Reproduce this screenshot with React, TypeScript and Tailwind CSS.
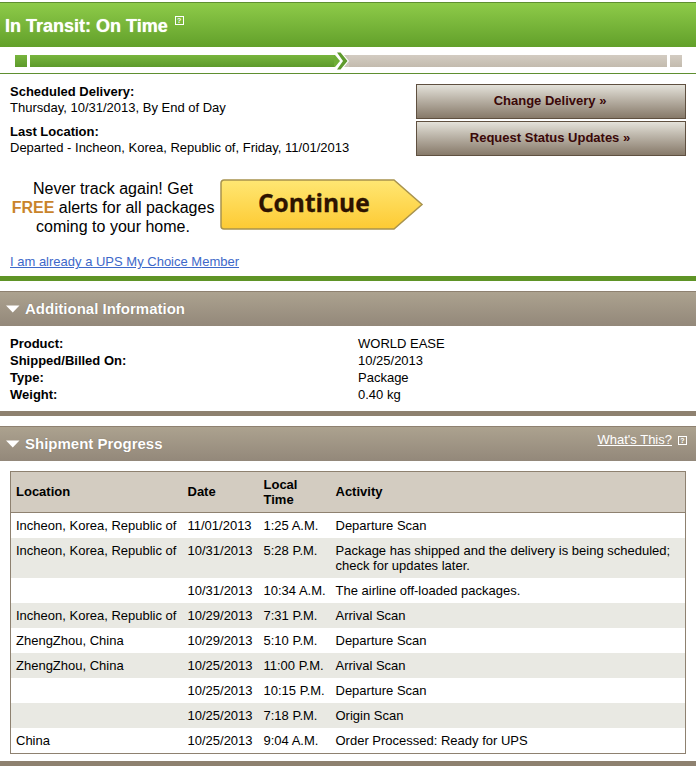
const rows = [
  { location: 'Incheon, Korea, Republic of', date: '11/01/2013', time: '1:25 A.M.', activity: 'Departure Scan' },
  {
    location: 'Incheon, Korea, Republic of',
    date: '10/31/2013',
    time: '5:28 P.M.',
    activity: 'Package has shipped and the delivery is being scheduled; check for updates later.',
  },
  { location: '', date: '10/31/2013', time: '10:34 A.M.', activity: 'The airline off-loaded packages.' },
  { location: 'Incheon, Korea, Republic of', date: '10/29/2013', time: '7:31 P.M.', activity: 'Arrival Scan' },
  { location: 'ZhengZhou, China', date: '10/29/2013', time: '5:10 P.M.', activity: 'Departure Scan' },
  { location: 'ZhengZhou, China', date: '10/25/2013', time: '11:00 P.M.', activity: 'Arrival Scan' },
  { location: '', date: '10/25/2013', time: '10:15 P.M.', activity: 'Departure Scan' },
  { location: '', date: '10/25/2013', time: '7:18 P.M.', activity: 'Origin Scan' },
  { location: 'China', date: '10/25/2013', time: '9:04 A.M.', activity: 'Order Processed: Ready for UPS' },
];

const details = [
  ['Product:', 'WORLD EASE'],
  ['Shipped/Billed On:', '10/25/2013'],
  ['Type:', 'Package'],
  ['Weight:', '0.40 kg'],
];

const HelpIcon = () => (
  <span className="inline-flex size-[9px] items-center justify-center border border-white text-[7px] leading-none font-bold text-white">
    ?
  </span>
);

const SectionHeader = ({ title, children }: { title: string; children?: React.ReactNode }) => (
  <div className="flex h-[35px] border-t border-[#8e8170] bg-gradient-to-b from-[#aca28f] to-[#93887a] pl-[6px]">
    <div className="flex h-[33px] flex-1 items-center">
      <svg width="14" height="8" viewBox="0 0 14 8" className="mr-[5px]">
        <path d="M0 0.5h13.5L6.75 7.5z" fill="#fff" />
      </svg>
      <span className="text-[15px] font-bold text-white [text-shadow:0_0_1px_#6f6556]">{title}</span>
    </div>
    {children}
  </div>
);

const ActionButton = ({ label }: { label: string }) => (
  <button className="h-[35px] w-[270px] border border-[#5f5040] bg-gradient-to-b from-[#e4e2da] to-[#877a6a] pr-[2px] pb-[2px] text-[13px] font-bold text-[#3a0808]">
    {label}
  </button>
);

export default function App() {
  return (
    <div className="w-[696px] bg-white pt-[2px] font-['Liberation_Sans',Arial,sans-serif] text-[13px] leading-[16px] text-black">
      <div className="flex h-[45px] items-start border-t border-[#5f8f30] bg-gradient-to-b from-[#8ecb49] to-[#62a02a] pt-[11px] pl-[5px]">
        <span className="text-[18px] leading-[24px] font-bold text-white [text-shadow:0_0_1px_#dff5c8]">
          In Transit: On Time
        </span>
        <span className="mt-[2px] ml-[7px] flex">
          <HelpIcon />
        </span>
      </div>

      <div className="flex h-[27px] border-b border-[#5f8f30] pt-[8px] pl-[15px]">
        <div className="h-[12px] w-[12px] bg-gradient-to-b from-[#78b53e] to-[#5d9a2b]" />
        <div className="ml-[3px] h-[12px] w-[304px] bg-gradient-to-b from-[#78b53e] to-[#5d9a2b]" />
        <svg width="15" height="18" viewBox="0 0 15 18" className="-mt-[3px] shrink-0">
          <path d="M0 3h1l5 6-5 6H0z" fill="#6fae37" />
          <path d="M3 0.5h3.5L13.5 9l-7 8.5H3L9 9z" fill="#5f9a2e" />
          <path d="M10 3h5v12h-5l5-6z" fill="#cdc6ba" />
        </svg>
        <div className="h-[12px] w-[318px] bg-gradient-to-b from-[#d3ccc2] to-[#c3bbae]" />
        <div className="ml-[3px] h-[12px] w-[12px] bg-gradient-to-b from-[#d3ccc2] to-[#c3bbae]" />
      </div>

      <div className="flex h-[207px] border-b-[5px] border-[#5f9426]">
        <div className="w-[416px] shrink-0 pt-[10px]">
          <div className="pl-[10px]">
            <p className="font-bold">Scheduled Delivery:</p>
            <p>Thursday, 10/31/2013, By End of Day</p>
            <p className="mt-[8px] font-bold">Last Location:</p>
            <p>Departed - Incheon, Korea, Republic of, Friday, 11/01/2013</p>
          </div>
          <div className="mt-[23px] flex">
            <p className="w-[220px] shrink-0 pl-[6px] text-center text-[16px] leading-[19px]">
              Never track again! Get
              <br />
              <span className="font-bold text-[#c9842b]">FREE</span> alerts for all packages
              <br />
              coming to your home.
            </p>
            <button className="relative h-[51px] w-[204px] shrink-0">
              <svg width="204" height="51" viewBox="0 0 204 51" className="absolute inset-0">
                <defs>
                  <linearGradient id="continue-fill" x1="0" y1="0" x2="0" y2="1">
                    <stop offset="0" stopColor="#ffe773" />
                    <stop offset="1" stopColor="#fdca33" />
                  </linearGradient>
                </defs>
                <path
                  d="M4 1h170l28 24.5-28 24.5H4a3 3 0 0 1-3-3V4a3 3 0 0 1 3-3z"
                  fill="url(#continue-fill)"
                  stroke="#a8934e"
                  strokeWidth="1.5"
                />
              </svg>
              <span className="absolute top-0 left-[38px] font-['Open_Sans',sans-serif] text-[24.5px] leading-[47px] font-bold text-[#2e1300] [-webkit-text-stroke:0.3px_#2e1300]">
                Continue
              </span>
            </button>
          </div>
          <a href="#" className="mt-[18px] ml-[10px] block leading-[16px] text-[#3d68c9] underline">
            I am already a UPS My Choice Member
          </a>
        </div>
        <div className="flex flex-col gap-[2px] pt-[10px]">
          <ActionButton label="Change Delivery »" />
          <ActionButton label="Request Status Updates »" />
        </div>
      </div>

      <div className="mt-[10px]">
        <SectionHeader title="Additional Information" />
        <div className="h-[90px] border-b-[5px] border-[#8e8170] pt-[10px] pl-[10px]">
          {details.map(([label, value]) => (
            <div key={label} className="flex h-[17px]">
              <span className="w-[348px] font-bold">{label}</span>
              <span>{value}</span>
            </div>
          ))}
        </div>
      </div>

      <div className="mt-[10px]">
        <SectionHeader title="Shipment Progress">
          <div className="flex h-[26px] items-center gap-[6px] pr-[9px]">
            <a href="#" className="text-[13px] text-white underline">
              What&apos;s This?
            </a>
            <HelpIcon />
          </div>
        </SectionHeader>
        <div className="border-b-[5px] border-[#8e8170] px-[10px] pt-[10px] pb-[7px]">
          <table className="w-[676px] table-fixed border border-[#8e8170] leading-[15px]">
            <colgroup>
              <col className="w-[172px]" />
              <col className="w-[76px]" />
              <col className="w-[72px]" />
              <col />
            </colgroup>
            <thead>
              <tr className="h-[41px] border-b border-[#8e8170] bg-[#d3ccc1] text-left font-bold">
                <th className="px-[5px] pb-[2px]">Location</th>
                <th className="px-[5px] pb-[2px]">Date</th>
                <th className="px-[5px]">
                  Local
                  <br />
                  Time
                </th>
                <th className="px-[5px] pb-[2px]">Activity</th>
              </tr>
            </thead>
            <tbody>
              {rows.map((row, i) => (
                <tr key={i} className={i % 2 === 1 ? 'bg-[#e9e9e3]' : 'bg-white'}>
                  <td className="px-[5px] py-[5px] align-top whitespace-nowrap">{row.location}</td>
                  <td className="px-[5px] py-[5px] align-top whitespace-nowrap">{row.date}</td>
                  <td className="px-[5px] py-[5px] align-top whitespace-nowrap">{row.time}</td>
                  <td className="px-[5px] py-[5px] pr-[8px] align-top">{row.activity}</td>
                </tr>
              ))}
            </tbody>
          </table>
        </div>
      </div>
    </div>
  );
}
